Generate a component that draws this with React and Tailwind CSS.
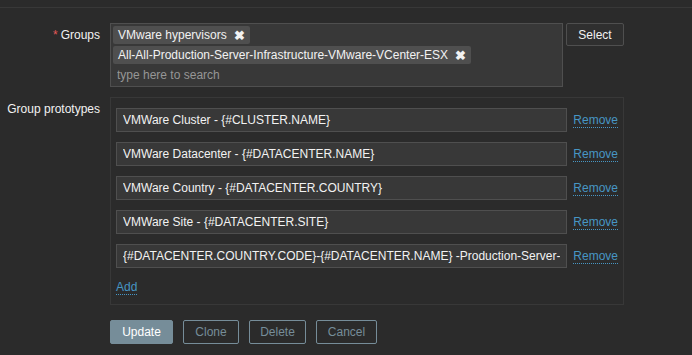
const prototypes = [
  'VMWare Cluster - {#CLUSTER.NAME}',
  'VMWare Datacenter - {#DATACENTER.NAME}',
  'VMWare Country - {#DATACENTER.COUNTRY}',
  'VMWare Site - {#DATACENTER.SITE}',
  '{#DATACENTER.COUNTRY.CODE}-{#DATACENTER.NAME} -Production-Server-Infrastructure-VMware-ESX',
];

const chips = ['VMware hypervisors', 'All-All-Production-Server-Infrastructure-VMware-VCenter-ESX'];

function Chip({ label }) {
  return (
    <span className="inline-flex items-center h-[18px] pl-[5px] pr-[5px] bg-[#4f4f4f] rounded-[2px] text-[#f2f2f2] self-start">
      <span className="leading-[18px]">{label}</span>
      <span className="ml-[7px] text-[13px] font-bold leading-none">✖</span>
    </span>
  );
}

function LinkText({ children }) {
  return (
    <span className="text-[#4796c4] border-b border-dotted border-[#4796c4] leading-[14px]">{children}</span>
  );
}

export default function App() {
  return (
    <div
      className="w-[692px] h-[355px] bg-[#2b2b2b] text-[12px] text-[#f2f2f2] overflow-hidden"
      style={{ fontFamily: '"Liberation Sans", Arial, sans-serif' }}
    >
      <div className="h-[8px] border-b border-[#383838]" />

      <div className="pt-[15px] flex flex-col gap-[10px]">
        {/* Groups */}
        <div className="flex">
          <div className="w-[110px] pr-[10px] text-right leading-[24px]">
            <span className="text-[#e45959] mr-[3px]">*</span>Groups
          </div>
          <div className="w-[453px] h-[64px] bg-[#383838] border border-[#4f4f4f] px-[2px] pt-[2px] flex flex-col gap-[2px]">
            {chips.map((c) => (
              <Chip key={c} label={c} />
            ))}
            <input
              placeholder="type here to search"
              className="pl-[4px] h-[18px] bg-transparent outline-none placeholder:text-[#969696]"
            />
          </div>
          <button className="ml-[3px] w-[58px] h-[23px] border border-[#4f4f4f] bg-[#2f2f2f] rounded-[2px] text-[#f2f2f2]">
            Select
          </button>
        </div>

        {/* Group prototypes */}
        <div className="flex">
          <div className="w-[110px] pr-[10px] text-right leading-[24px]">Group prototypes</div>
          <div className="w-[514px] border border-[#383838] px-[5px] pt-[10px] pb-[10px] flex flex-col gap-[10px]">
            {prototypes.map((p, i) => (
              <div key={i} className="flex items-center">
                <input
                  readOnly
                  value={p}
                  className="w-[453px] h-[24px] bg-[#383838] border border-[#4f4f4f] px-[6px] text-[#f2f2f2] outline-none"
                />
                <span className="ml-[6px]">
                  <LinkText>Remove</LinkText>
                </span>
              </div>
            ))}
            <div className="h-[16px]">
              <LinkText>Add</LinkText>
            </div>
          </div>
        </div>

        {/* Actions */}
        <div className="flex gap-[10px] pl-[110px] mt-[5px]">
          <button className="w-[63px] h-[24px] bg-[#768d99] border border-[#768d99] rounded-[2px] text-white">Update</button>
          <button className="w-[56px] h-[24px] border border-[#768d99] rounded-[2px] text-[#768d99]">Clone</button>
          <button className="w-[57px] h-[24px] border border-[#768d99] rounded-[2px] text-[#768d99]">Delete</button>
          <button className="w-[61px] h-[24px] border border-[#768d99] rounded-[2px] text-[#768d99]">Cancel</button>
        </div>
      </div>
    </div>
  );
}
